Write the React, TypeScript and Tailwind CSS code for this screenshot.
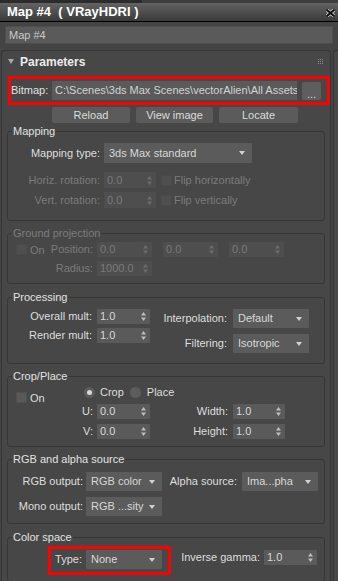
import React from "react";

function Arrows({ c }: { c: string }) {
  return (
    <svg width="5" height="9" viewBox="0 0 5 9" className="shrink-0">
      <path d="M2.5 0 L5 3.5 L0 3.5 Z M0 5.5 L5 5.5 L2.5 9 Z" fill={c} />
    </svg>
  );
}

function Spinner({ value, className, disabled }: { value: string; className: string; disabled?: boolean }) {
  return (
    <div
      className={`flex items-center justify-between pl-[3px] pr-[4px] rounded-[1px] shrink-0 ${
        disabled ? "bg-[#4e4e4e] text-[#7a7a7a]" : "bg-[#5a5a5a] text-[#d8d8d8]"
      } ${className}`}
    >
      <span className="whitespace-nowrap">{value}</span>
      <Arrows c={disabled ? "#6c6c6c" : "#bdbdbd"} />
    </div>
  );
}

function Dropdown({ value, className }: { value: string; className: string }) {
  return (
    <div className={`flex items-center justify-between pl-[5px] pr-[7px] bg-[#5b5b5b] text-[#d8d8d8] rounded-[1px] shrink-0 ${className}`}>
      <span className="whitespace-nowrap">{value}</span>
      <svg width="6" height="4" viewBox="0 0 6 4" className="shrink-0">
        <path d="M0 0 H6 L3 4 Z" fill="#d2d2d2" />
      </svg>
    </div>
  );
}

function Check({ disabled }: { disabled?: boolean }) {
  return (
    <div
      className={`w-[11px] h-[11px] shrink-0 border ${
        disabled ? "bg-[#4f4f4f] border-[#4a4a4a]" : "bg-[#595959] border-[#505050]"
      }`}
    />
  );
}

function Radio({ on }: { on?: boolean }) {
  return (
    <div className="w-[11px] h-[11px] rounded-full bg-[#5c5c5c] flex items-center justify-center shrink-0">
      {on ? <div className="w-[5px] h-[5px] rounded-full bg-[#dadada]" /> : null}
    </div>
  );
}

function Legend({ children, disabled }: { children: React.ReactNode; disabled?: boolean }) {
  return (
    <legend className={`ml-[4px] px-[1px] leading-[14px] text-[11px] ${disabled ? "text-[#7c7c7c]" : "text-[#e2e2e2]"}`}>
      {children}
    </legend>
  );
}

const fs = "ml-[5px] w-[318px] border border-[#363636] rounded-[3px] p-0 m-0 min-w-0 shrink-0";

export default function App() {
  return (
    <div className="w-[338px] h-[581px] overflow-hidden bg-[#444444] flex flex-col font-['Liberation_Sans',Arial,sans-serif] text-[11px] leading-[13px] text-[#dedede] select-none">
      {/* top strip */}
      <div className="h-[3px] flex shrink-0">
        <div className="w-[142px] bg-[#2b2b2b]" />
        <div className="flex-1 bg-[#3e3e3e]" />
      </div>

      {/* title bar */}
      <div className="h-[19px] shrink-0 flex items-center justify-between pl-[7px] pr-[3px] bg-gradient-to-b from-[#636363] to-[#3a3a3a] border-b border-black">
        <span className="text-[13px] font-bold text-white leading-[16px] whitespace-pre">Map #4  ( VRayHDRI )</span>
        <svg width="9" height="8" viewBox="0 0 9 8" className="mt-[1px]">
          <path d="M1 1 L8 7 M8 1 L1 7" stroke="#d8d8d8" strokeWidth="3.4" strokeLinecap="square" />
          <path d="M1 1 L8 7 M8 1 L1 7" stroke="#0d0d0d" strokeWidth="2" strokeLinecap="square" />
        </svg>
      </div>

      {/* name field */}
      <div className="mt-[4px] mx-[5px] h-[18px] shrink-0 bg-[#5a5a5a] border border-[#4e4e4e] flex items-center pl-[3px] text-[#c8c8c8]">
        Map #4
      </div>

      {/* panel area */}
      <div className="mt-[6px] flex-1 flex min-h-0">
        <div className="ml-[1px] w-[330px] border border-b-0 border-[#363636] rounded-t-[4px] bg-[#474747] flex flex-col min-h-0">
          {/* rollout header */}
          <div className="h-[21px] shrink-0 flex items-center">
            <svg width="6" height="5" viewBox="0 0 6 5" className="ml-[6px] shrink-0">
              <path d="M0 0 H6 L3 5 Z" fill="#a9a9a9" />
            </svg>
            <span className="ml-[6px] text-[12px] font-bold text-[#ececec] leading-[14px]">Parameters</span>
            <div className="flex-1" />
            <svg width="5" height="5" viewBox="0 0 5 5" className="mr-[7px] shrink-0">
              <g fill="#8a8a8a">
                <rect x="0" y="0" width="1" height="1" />
                <rect x="2" y="0" width="1" height="1" />
                <rect x="4" y="0" width="1" height="1" />
                <rect x="0" y="2" width="1" height="1" />
                <rect x="2" y="2" width="1" height="1" />
                <rect x="4" y="2" width="1" height="1" />
                <rect x="0" y="4" width="1" height="1" />
                <rect x="2" y="4" width="1" height="1" />
                <rect x="4" y="4" width="1" height="1" />
              </g>
            </svg>
          </div>

          {/* bitmap row (highlighted) */}
          <div className="mt-[4px] ml-[6px] w-[322px] h-[29px] shrink-0 border-[3px] border-[#ff0000] flex items-center">
            <span className="w-[41px] shrink-0 text-[#e0e0e0]">Bitmap:</span>
            <div className="w-[245px] h-[19px] shrink-0 bg-[#5a5a5a] pl-[3px] flex items-center overflow-hidden whitespace-nowrap text-[#d2d2d2]">
              C:\Scenes\3ds Max Scenes\vectorAlien\All Assets
            </div>
            <div className="ml-[5px] w-[19px] h-[18px] shrink-0 bg-[#5e5e5e] rounded-[2px] flex items-end justify-center pb-[1px] text-[#d8d8d8] leading-[10px]">
              ...
            </div>
          </div>

          {/* buttons */}
          <div className="mt-[2px] ml-[50px] flex gap-[6px] shrink-0">
            <div className="w-[78px] h-[16px] bg-[#5b5b5b] rounded-[2px] flex items-center justify-center text-[#dcdcdc]">Reload</div>
            <div className="w-[77px] h-[16px] bg-[#5b5b5b] rounded-[2px] flex items-center justify-center text-[#dcdcdc]">View image</div>
            <div className="w-[79px] h-[16px] bg-[#5b5b5b] rounded-[2px] flex items-center justify-center text-[#dcdcdc]">Locate</div>
          </div>

          {/* Mapping */}
          <fieldset className={`${fs} mt-[1px] pb-[12px]`}>
            <Legend>Mapping</Legend>
            <div className="mt-[5px] h-[20px] flex items-center">
              <span className="w-[92px] text-right shrink-0">Mapping type:</span>
              <Dropdown value="3ds Max standard" className="ml-[4px] w-[148px] h-[20px]" />
            </div>
            <div className="mt-[9px] h-[16px] flex items-center text-[#7b7b7b]">
              <span className="w-[92px] text-right shrink-0">Horiz. rotation:</span>
              <Spinner value="0.0" disabled className="ml-[4px] w-[52px] h-[16px]" />
              <div className="ml-[5px]"><Check disabled /></div>
              <span className="ml-[2px]">Flip horizontally</span>
            </div>
            <div className="mt-[4px] h-[16px] flex items-center text-[#7b7b7b]">
              <span className="w-[92px] text-right shrink-0">Vert. rotation:</span>
              <Spinner value="0.0" disabled className="ml-[4px] w-[52px] h-[16px]" />
              <div className="ml-[5px]"><Check disabled /></div>
              <span className="ml-[2px]">Flip vertically</span>
            </div>
          </fieldset>

          {/* Ground projection */}
          <fieldset className={`${fs} mt-[5px] pb-[7px]`}>
            <Legend disabled>Ground projection</Legend>
            <div className="mt-[2px] h-[15px] flex items-center text-[#7b7b7b]">
              <div className="w-[85px] shrink-0 flex items-center pl-[8px]">
                <Check disabled />
                <span className="ml-[3px] mt-[2px]">On</span>
                <span className="flex-1 text-right">Position:</span>
              </div>
              <Spinner value="0.0" disabled className="ml-[4px] w-[55px] h-[15px]" />
              <Spinner value="0.0" disabled className="ml-[11px] w-[55px] h-[15px]" />
              <Spinner value="0.0" disabled className="ml-[11px] w-[55px] h-[15px]" />
            </div>
            <div className="mt-[4px] h-[15px] flex items-center text-[#7b7b7b]">
              <span className="w-[85px] text-right shrink-0">Radius:</span>
              <Spinner value="1000.0" disabled className="ml-[4px] w-[55px] h-[15px]" />
            </div>
          </fieldset>

          {/* Processing */}
          <fieldset className={`${fs} mt-[6px] pb-[10px]`}>
            <Legend>Processing</Legend>
            <div className="mt-[5px] flex">
              <div className="w-[142px] shrink-0 flex flex-col gap-[4px]">
                <div className="h-[15px] flex items-center">
                  <span className="w-[84px] text-right shrink-0">Overall mult:</span>
                  <Spinner value="1.0" className="ml-[5px] w-[53px] h-[15px]" />
                </div>
                <div className="h-[15px] flex items-center">
                  <span className="w-[84px] text-right shrink-0">Render mult:</span>
                  <Spinner value="1.0" className="ml-[5px] w-[53px] h-[15px]" />
                </div>
              </div>
              <div className="flex flex-col gap-[6px]">
                <div className="h-[19px] flex items-center">
                  <span className="w-[77px] text-right shrink-0">Interpolation:</span>
                  <Dropdown value="Default" className="ml-[6px] w-[76px] h-[19px]" />
                </div>
                <div className="h-[19px] flex items-center">
                  <span className="w-[77px] text-right shrink-0">Filtering:</span>
                  <Dropdown value="Isotropic" className="ml-[6px] w-[76px] h-[19px]" />
                </div>
              </div>
            </div>
          </fieldset>

          {/* Crop/Place */}
          <fieldset className={`${fs} mt-[5px] pb-[7px]`}>
            <Legend>Crop/Place</Legend>
            <div className="mt-[2px] h-[16px] flex items-start">
              <div className="w-[76px] shrink-0 pl-[8px] mt-[5px] flex items-center">
                <Check />
                <span className="ml-[3px] mt-[2px]">On</span>
              </div>
              <div className="mt-[1px] flex items-center">
                <Radio on />
                <span className="ml-[5px]">Crop</span>
                <div className="ml-[6px]"><Radio /></div>
                <span className="ml-[6px]">Place</span>
              </div>
            </div>
            <div className="mt-[3px] h-[15px] flex items-center">
              <span className="w-[85px] text-right shrink-0">U:</span>
              <Spinner value="0.0" className="ml-[4px] w-[53px] h-[15px]" />
              <span className="w-[78px] text-right shrink-0">Width:</span>
              <Spinner value="1.0" className="ml-[5px] w-[52px] h-[15px]" />
            </div>
            <div className="mt-[5px] h-[15px] flex items-center">
              <span className="w-[85px] text-right shrink-0">V:</span>
              <Spinner value="0.0" className="ml-[4px] w-[53px] h-[15px]" />
              <span className="w-[78px] text-right shrink-0">Height:</span>
              <Spinner value="1.0" className="ml-[5px] w-[52px] h-[15px]" />
            </div>
          </fieldset>

          {/* RGB and alpha source */}
          <fieldset className={`${fs} mt-[5px] pb-[7px]`}>
            <Legend>RGB and alpha source</Legend>
            <div className="mt-[6px] h-[19px] flex items-center">
              <span className="w-[75px] text-right shrink-0">RGB output:</span>
              <Dropdown value="RGB color" className="ml-[3px] w-[76px] h-[19px]" />
              <span className="w-[75px] text-right shrink-0">Alpha source:</span>
              <Dropdown value="Ima...pha" className="ml-[5px] w-[76px] h-[19px]" />
            </div>
            <div className="mt-[6px] h-[19px] flex items-center">
              <span className="w-[75px] text-right shrink-0">Mono output:</span>
              <Dropdown value="RGB ...sity" className="ml-[3px] w-[76px] h-[19px]" />
            </div>
          </fieldset>

          {/* Color space */}
          <fieldset className={`${fs} mt-[6px] pb-[6px]`}>
            <Legend>Color space</Legend>
            <div className="mt-[2px] flex items-start">
              <div className="ml-[40px] w-[123px] h-[29px] shrink-0 border-[3px] border-[#ff0000] flex items-start pt-[1px] pl-[4px]">
                <span className="w-[27px] h-[18px] flex items-center justify-end shrink-0">Type:</span>
                <Dropdown value="None" className="ml-[4px] w-[76px] h-[19px]" />
              </div>
              <div className="mt-[4px] flex items-center h-[15px]">
                <span className="w-[89px] text-right shrink-0">Inverse gamma:</span>
                <Spinner value="1.0" className="ml-[4px] w-[53px] h-[15px]" />
              </div>
            </div>
          </fieldset>
        </div>
        <div className="ml-[2px] flex-1 border-l border-t border-[#363636] rounded-tl-[3px] bg-[#484848]" />
      </div>
    </div>
  );
}
